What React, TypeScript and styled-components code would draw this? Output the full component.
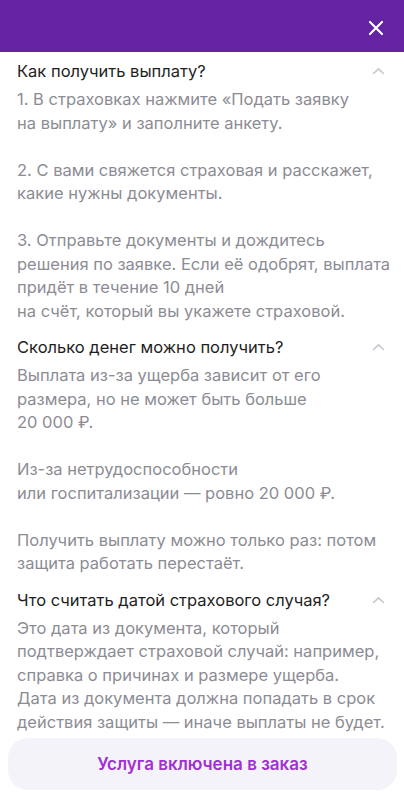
import React from "react";
import styled, { createGlobalStyle } from "styled-components";

const Global = createGlobalStyle`
  html, body { margin: 0; padding: 0; background: #ffffff; }
  body { font-family: Inter, "Noto Sans", sans-serif; -webkit-font-smoothing: antialiased; }
  * { box-sizing: border-box; }
`;

const Page = styled.div`
  width: 404px;
  height: 800px;
  display: flex;
  flex-direction: column;
  background: #ffffff;
  overflow: hidden;
`;

const Header = styled.header`
  height: 52px;
  flex: none;
  background: #6423a2;
  display: flex;
  align-items: center;
  justify-content: flex-end;
  padding: 0 16px 0 0;
`;

const CloseButton = styled.button`
  width: 24px;
  height: 24px;
  border: 0;
  padding: 0;
  background: transparent;
  display: flex;
  align-items: center;
  justify-content: center;
  margin-top: 4px;
`;

const Content = styled.main`
  flex: 1;
  min-height: 0;
  overflow: hidden;
  padding: 7px 10px 0 17px;
`;

const Section = styled.section<{ $first?: boolean }>`
  margin-top: ${(p) => (p.$first ? "0" : "12px")};
`;

const TitleRow = styled.div`
  display: flex;
  align-items: center;
  justify-content: space-between;
  height: 24px;
  margin-bottom: 5px;
`;

const Title = styled.h3`
  margin: 0;
  font-size: 16.5px;
  line-height: 24px;
  font-weight: 400;
  color: #1e1e22;
  white-space: nowrap;
`;

const Chevron = styled.span`
  display: flex;
  width: 14px;
  justify-content: center;
  margin-right: 9px;
`;

const Body = styled.div`
  font-size: 16.5px;
  line-height: 23.5px;
  color: #8c8c94;
  white-space: nowrap;
`;

const Para = styled.p`
  margin: 0 0 23.5px 0;
  &:last-child { margin-bottom: 0; }
`;

const Footer = styled.footer`
  flex: none;
  padding: 0 7px 10px 8px;
  background: #ffffff;
`;

const OrderButton = styled.button`
  width: 100%;
  height: 52px;
  border: 0;
  border-radius: 20px;
  background: #f4f3f9;
  color: #a130d0;
  font-family: Inter, "Noto Sans", sans-serif;
  font-size: 17px;
  font-weight: 600;
  display: flex;
  align-items: center;
  justify-content: center;
`;

const CloseIcon = () => (
  <svg width="16" height="16" viewBox="0 0 16 16">
    <path d="M2 2 L14 14 M14 2 L2 14" stroke="#ffffff" strokeWidth="2.2" strokeLinecap="round" />
  </svg>
);

const ChevronUp = () => (
  <svg width="13" height="8" viewBox="0 0 13 8">
    <path d="M1.5 6.5 L6.5 1.8 L11.5 6.5" stroke="#c6c6cf" strokeWidth="1.6" fill="none" strokeLinecap="round" strokeLinejoin="round" />
  </svg>
);

type Item = { title: string; paras: React.ReactNode[] };

const items: Item[] = [
  {
    title: "Как получить выплату?",
    paras: [
      <>1. В страховках нажмите «Подать заявку<br />на выплату» и заполните анкету.</>,
      <>2. С вами свяжется страховая и расскажет,<br />какие нужны документы.</>,
      <>3. Отправьте документы и дождитесь<br />решения по заявке. Если её одобрят, выплата<br />придёт в течение 10 дней<br />на счёт, который вы укажете страховой.</>,
    ],
  },
  {
    title: "Сколько денег можно получить?",
    paras: [
      <>Выплата из-за ущерба зависит от его<br />размера, но не может быть больше<br />20 000 ₽.</>,
      <>Из-за нетрудоспособности<br />или госпитализации — ровно 20 000 ₽.</>,
      <>Получить выплату можно только раз: потом<br />защита работать перестаёт.</>,
    ],
  },
  {
    title: "Что считать датой страхового случая?",
    paras: [
      <>Это дата из документа, который<br />подтверждает страховой случай: например,<br />справка о причинах и размере ущерба.<br />Дата из документа должна попадать в срок<br />действия защиты — иначе выплаты не будет.</>,
    ],
  },
];

export default function App() {
  return (
    <>
      <Global />
      <Page>
        <Header>
          <CloseButton aria-label="Закрыть">
            <CloseIcon />
          </CloseButton>
        </Header>
        <Content>
          {items.map((it, i) => (
            <Section key={it.title} $first={i === 0}>
              <TitleRow>
                <Title>{it.title}</Title>
                <Chevron>
                  <ChevronUp />
                </Chevron>
              </TitleRow>
              <Body>
                {it.paras.map((p, j) => (
                  <Para key={j}>{p}</Para>
                ))}
              </Body>
            </Section>
          ))}
        </Content>
        <Footer>
          <OrderButton>Услуга включена в заказ</OrderButton>
        </Footer>
      </Page>
    </>
  );
}
